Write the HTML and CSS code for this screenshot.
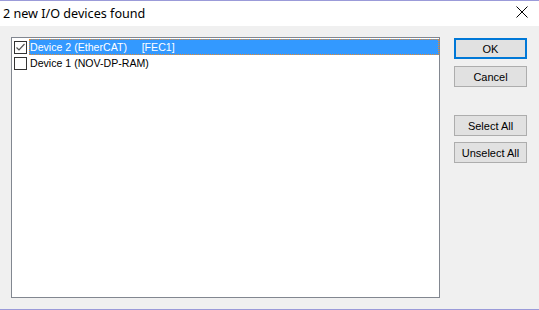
FILE: index.html
```html
<!DOCTYPE html>
<html lang="en">
<head>
  <meta charset="UTF-8">
  <title>2 new I/O devices found</title>
  <link rel="stylesheet" href="styles.css">
</head>
<body>

  <div class="window">
    <div class="titlebar">
      <span class="title">2 new I/O devices found</span>
      <svg class="close" width="12" height="12" viewBox="0 0 12 12">
        <path d="M0.5 0.5 L11.5 11.5 M11.5 0.5 L0.5 11.5" stroke="#000" stroke-width="1" fill="none"/>
      </svg>
    </div>

    <div class="dialog">
      <div class="device-list">
        <div class="item">
          <span class="check">
            <svg width="11" height="11" viewBox="0 0 11 11">
              <path d="M1.5 5.5 L4 8 L9.5 2" stroke="#555" stroke-width="1.2" fill="none"/>
            </svg>
          </span>
          <span class="label selected">Device 2 (EtherCAT)&nbsp;&nbsp;&nbsp;&nbsp;&nbsp;[FEC1]</span>
        </div>
        <div class="item">
          <span class="check"></span>
          <span class="label">Device 1 (NOV-DP-RAM)</span>
        </div>
      </div>

      <div class="buttons">
        <button class="btn default">OK</button>
        <button class="btn">Cancel</button>
        <button class="btn spaced">Select All</button>
        <button class="btn">Unselect All</button>
      </div>
    </div>
  </div>

</body>
</html>
```

FILE: styles.css
```css
body {
  margin: 0;
  padding: 0;
  background: #f0f0f0;
}

.window {
  width: 539px;
  height: 308px;
  border-top: 1px solid #9b9bd9;
  border-bottom: 1px solid #9b9bd9;
  display: flex;
  flex-direction: column;
}

.titlebar {
  height: 25px;
  background: #ffffff;
  display: flex;
  align-items: center;
  justify-content: space-between;
  padding: 0 11px 0 3px;
}

.title {
  font-family: "Noto Sans", "Open Sans", sans-serif;
  font-size: 12.6px;
  color: #000;
  margin-top: -1px;
}

.close {
  display: block;
  margin-top: -3px;
}

.dialog {
  flex: 1;
  background: #f0f0f0;
  display: flex;
  padding: 11px 0 0 11px;
  gap: 14px;
  font-family: "Liberation Sans", Arial, sans-serif;
  font-size: 11px;
}

.device-list {
  width: 427px;
  height: 258px;
  background: #ffffff;
  border: 1px solid #828790;
  padding-top: 1px;
  font-size: 10.6px;
}

.item {
  height: 16px;
  display: flex;
  align-items: center;
  padding-left: 2px;
}

.check {
  width: 11px;
  height: 11px;
  border: 1px solid #333;
  background: #fff;
  margin-right: 2px;
  display: flex;
}

.label {
  height: 16px;
  line-height: 16px;
  padding-left: 1px;
  color: #000;
  white-space: nowrap;
}

.label.selected {
  flex: 1;
  background: #3399ff;
  color: #ffffff;
  outline: 1px dotted #e88a2e;
  outline-offset: -1px;
}

.buttons {
  display: flex;
  flex-direction: column;
  gap: 7px;
  padding-top: 1px;
}

.btn {
  width: 73px;
  height: 21px;
  background: #e1e1e1;
  border: 1px solid #adadad;
  font-family: "Liberation Sans", Arial, sans-serif;
  font-size: 11px;
  color: #000;
  padding: 0;
}

.btn.default {
  border: 2px solid #0078d7;
}

.btn.spaced {
  margin-top: 21px;
}

.btn.spaced + .btn {
  margin-top: -1px;
}
```
